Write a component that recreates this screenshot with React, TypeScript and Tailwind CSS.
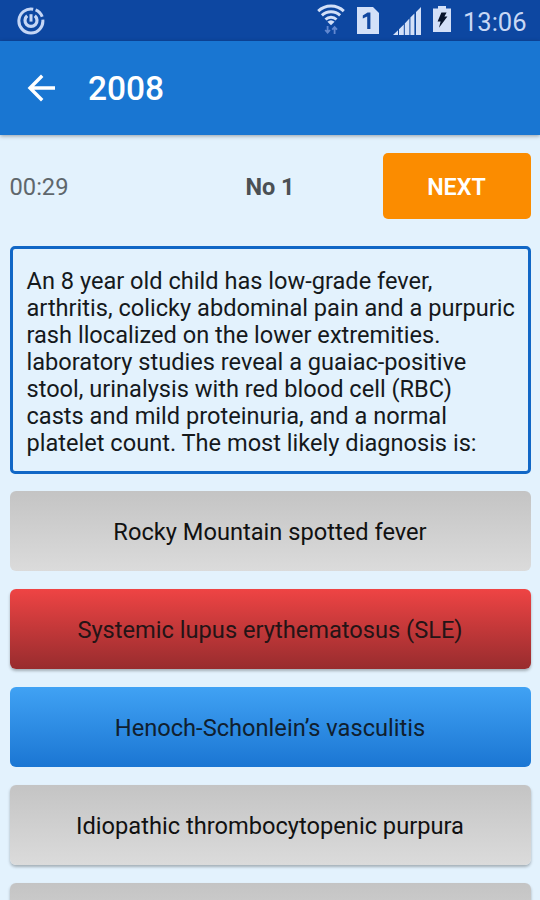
interface Option {
  label: string;
  state: "idle" | "wrong" | "right";
  raised?: boolean;
}

const OPTIONS: Option[] = [
  { label: "Rocky Mountain spotted fever", state: "idle" },
  { label: "Systemic lupus erythematosus (SLE)", state: "wrong", raised: true },
  { label: "Henoch-Schonlein’s vasculitis", state: "right" },
  { label: "Idiopathic thrombocytopenic purpura", state: "idle", raised: true },
  { label: "", state: "idle", raised: true },
];

const QUESTION = [
  "An 8 year old child has low-grade fever,",
  "arthritis, colicky abdominal pain and a purpuric",
  "rash llocalized on the lower extremities.",
  "laboratory studies reveal a guaiac-positive",
  "stool, urinalysis with red blood cell (RBC)",
  "casts and mild proteinuria, and a normal",
  "platelet count. The most likely diagnosis is:",
];

const FILL = {
  idle: "from-[#c4c4c4] to-[#dbdbdb] text-[#111111]",
  wrong: "from-[#ef4444] to-[#982c2e] text-[#241416]",
  right: "from-[#40a2f4] to-[#1a76d3] text-[#10202f]",
};

function PowerIcon() {
  return (
    <svg width="28" height="28" viewBox="0 0 28 28" fill="none" stroke="#c5d6f5">
      <path d="M16.2 2.2A12 12 0 1 0 25.8 12.6" strokeWidth="3" />
      <path d="M18.6 2.9A12 12 0 0 1 25.2 9.8" strokeWidth="3" />
      <path d="M10.2 8.8A6 6 0 1 0 17.8 8.8" strokeWidth="3.2" />
      <path d="M14 7.2V14.6" strokeWidth="3" />
    </svg>
  );
}

function WifiIcon() {
  return (
    <svg width="28" height="31" viewBox="0 0 28 31" fill="none" stroke="#d3e0f8">
      <path d="M1.2 7.1A18.5 18.5 0 0 1 26.8 7.1" strokeWidth="2.9" />
      <path d="M4.9 11.4A13 13 0 0 1 23.1 11.4" strokeWidth="2.9" />
      <path d="M8.5 15.5A8 8 0 0 1 19.5 15.5" strokeWidth="2.9" />
      <path d="M10.4 17.8A5.4 5.4 0 0 1 17.6 17.8L14 21.2Z" fill="#d3e0f8" stroke="none" />
      <path d="M10.6 22V28.5M8.2 26L10.6 28.6L13 26M17.6 30V23.2M15.2 25.6L17.6 23L20 25.6" stroke="#6288d0" strokeWidth="1.8" />
    </svg>
  );
}

function SimIcon() {
  return (
    <svg width="22" height="27" viewBox="0 0 22 27">
      <path d="M0 0H16L22 6V27H0Z" fill="#d3e0f8" />
      <path d="M5.8 8.6L10.6 5.4H13.4V22H10.2V9.4L5.8 11.6Z" fill="#1046a0" />
    </svg>
  );
}

function SignalIcon() {
  return (
    <svg width="28" height="28" viewBox="0 0 28 28" fill="#d3e0f8">
      <path d="M0 28L5 23.2V28ZM6 22.2L10.8 17.4V28H6ZM11.8 16.4L16.4 11.6V28H11.8ZM17.4 10.6L21.4 6.6V28H17.4ZM23 5L28 0V28H23Z" />
    </svg>
  );
}

function BatteryIcon() {
  return (
    <svg width="18" height="26" viewBox="0 0 18 26">
      <path d="M5 0H13V2.6H18V26H0V2.6H5Z" fill="#d3e0f8" />
      <path d="M8.4 6.4H13.6L11.4 10.4H14.4L6 21.8L7.6 15.6H4.6Z" fill="#07142c" />
    </svg>
  );
}

function StatusBar() {
  return (
    <div className="flex h-[41px] shrink-0 items-start bg-[#0d47a1] pl-[17px]">
      <div className="pt-[7px]">
        <PowerIcon />
      </div>
      <div className="ml-[272px] pt-[4px]">
        <WifiIcon />
      </div>
      <div className="ml-[12px] pt-[7px]">
        <SimIcon />
      </div>
      <div className="ml-[14px] pt-[7px]">
        <SignalIcon />
      </div>
      <div className="ml-[12px] pt-[6px]">
        <BatteryIcon />
      </div>
      <span className="ml-[12px] pt-[7px] text-[25.5px] leading-[31px] text-[#c8d8f5]">13:06</span>
    </div>
  );
}

function AppBar() {
  return (
    <header className="z-10 flex h-[94px] shrink-0 items-center bg-[#1976d2] pl-[27px] shadow-[0_1px_4px_rgba(0,0,0,0.35)]">
      <svg width="28" height="28" viewBox="0 0 28 28" fill="none" stroke="#fff" strokeWidth="3.4">
        <path d="M28 14H3M15.2 1.8L3 14L15.2 26.2" />
      </svg>
      <h1 className="ml-[33px] pt-[2px] text-[33.5px] leading-[40px] font-medium text-white">2008</h1>
    </header>
  );
}

export default function App() {
  return (
    <div className="flex h-[900px] w-[540px] flex-col overflow-hidden bg-[#e3f2fd] font-['Roboto',sans-serif]">
      <StatusBar />
      <AppBar />
      <main className="px-[9.5px] pt-[18px]">
        <div className="grid h-[66px] grid-cols-[148px_1fr_148px] items-center">
          <span className="pt-[3px] text-[23.7px] text-[#5f676c]">00:29</span>
          <span className="pt-[3px] text-center text-[23.5px] font-bold text-[#4b5054]">No 1</span>
          <button className="h-full rounded-[5px] bg-[#fb8c00] pt-[3px] text-[23.3px] font-semibold text-white">
            NEXT
          </button>
        </div>

        <div className="mt-[27px] h-[228px] rounded-[5px] border-[3px] border-[#1167c6] pt-[19px] pl-[14px] text-[23.6px] leading-[27px] whitespace-nowrap text-[#15191c]">
          {QUESTION.map((line) => (
            <p key={line}>{line}</p>
          ))}
        </div>

        <div className="mt-[17px] flex flex-col gap-[18px]">
          {OPTIONS.map((o, i) => (
            <button
              key={i}
              className={
                "h-[80px] shrink-0 rounded-[6px] bg-linear-to-b pt-[4px] text-[23.65px] " +
                FILL[o.state] +
                (o.raised ? " shadow-[0_2px_3px_rgba(0,0,0,0.28)]" : "")
              }
            >
              {o.label}
            </button>
          ))}
        </div>
      </main>
    </div>
  );
}
